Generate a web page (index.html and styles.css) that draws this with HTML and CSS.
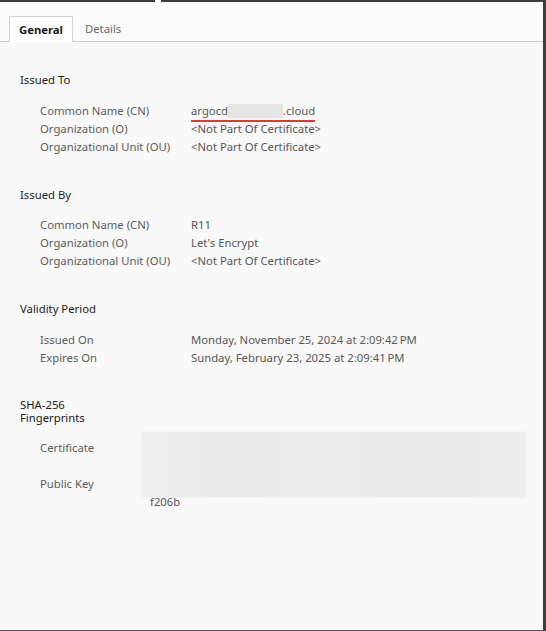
FILE: index.html
```html
<!DOCTYPE html>
<html>
<head>
<meta charset="utf-8">
<link rel="stylesheet" href="styles.css">
</head>
<body>
<div class="window">
  <div class="topbar"><div class="seg seg-left"></div><div class="seg seg-right"></div></div>
  <div class="tabs">
    <div class="tab tab-active">General</div>
    <div class="tab">Details</div>
  </div>
  <div class="content">
    <section class="section">
      <h2 class="heading">Issued To</h2>
      <div class="rows">
        <div class="label">Common Name (CN)</div>
        <div class="value"><span class="cn">argocd<span class="redact"></span>.cloud</span></div>
        <div class="label">Organization (O)</div>
        <div class="value">&lt;Not Part Of Certificate&gt;</div>
        <div class="label">Organizational Unit (OU)</div>
        <div class="value">&lt;Not Part Of Certificate&gt;</div>
      </div>
    </section>
    <section class="section">
      <h2 class="heading">Issued By</h2>
      <div class="rows">
        <div class="label">Common Name (CN)</div>
        <div class="value">R11</div>
        <div class="label">Organization (O)</div>
        <div class="value">Let's Encrypt</div>
        <div class="label">Organizational Unit (OU)</div>
        <div class="value">&lt;Not Part Of Certificate&gt;</div>
      </div>
    </section>
    <section class="section">
      <h2 class="heading">Validity Period</h2>
      <div class="rows">
        <div class="label">Issued On</div>
        <div class="value">Monday, November 25, 2024 at 2:09:42&#8201;PM</div>
        <div class="label">Expires On</div>
        <div class="value">Sunday, February 23, 2025 at 2:09:41&#8201;PM</div>
      </div>
    </section>
    <section class="section section-fp">
      <h2 class="heading heading-tight">SHA-256<br>Fingerprints</h2>
      <div class="fp">
        <div class="fp-labels">
          <div class="label">Certificate</div>
          <div class="label">Public Key</div>
        </div>
        <div class="fp-values">
          <div class="blur"></div>
          <div class="fp-tail">f206b</div>
        </div>
      </div>
    </section>
  </div>
</div>
</body>
</html>
```
FILE: styles.css
```css
html, body {
  margin: 0;
  padding: 0;
}
body {
  background: #fafafa;
  font-family: "Noto Sans", "Open Sans", sans-serif;
  font-size: 11.3px;
  color: #5c5c5c;
}
.window {
  width: 546px;
  height: 631px;
  box-sizing: border-box;
  border-right: 3px solid #3d3d3d;
  border-bottom: 1px solid #555;
  display: flex;
  flex-direction: column;
  background: #fafafa;
}
.topbar {
  display: flex;
  height: 2px;
  gap: 6px;
}
.seg {
  background: #3d3d3d;
}
.seg-left { width: 155px; }
.seg-right { flex: 1; }
.tabs {
  display: flex;
  align-items: flex-end;
  height: 40px;
  padding-left: 9px;
  border-bottom: 1px solid #c9c9c9;
  background: #fbfbfb;
  box-sizing: border-box;
}
.tab {
  height: 25px;
  line-height: 25px;
  padding: 0 12px;
  color: #6a6a6a;
  box-sizing: border-box;
}
.tab-active {
  width: 64px;
  padding: 0;
  text-align: center;
  font-weight: 700;
  color: #1a1a1a;
  background: #ffffff;
  border: 1px solid #d4d4d4;
  border-bottom: none;
  height: 26px;
  margin-bottom: -1px;
}
.content {
  padding: 29px 0 0 20px;
  flex: 1;
  background: #f9f9f9;
}
.section {
  margin-bottom: 30px;
}
.heading {
  margin: 0 0 12.5px 0;
  font-size: 11.3px;
  font-weight: 400;
  line-height: 18px;
  color: #1b1b1b;
}
.heading-tight {
  line-height: 13px;
  margin-bottom: 8px;
}
.section-fp {
  margin-top: 31px;
}
.rows {
  display: grid;
  grid-template-columns: 151px 1fr;
  padding-left: 20px;
  line-height: 18px;
}
.value {
  color: #575757;
  white-space: nowrap;
}
.cn {
  display: inline-block;
  position: relative;
  height: 18px;
}
.cn::after {
  content: "";
  position: absolute;
  left: 0;
  right: 0;
  bottom: -2px;
  height: 2px;
  background: #d83b3f;
}
.redact {
  display: inline-block;
  width: 55px;
  height: 14px;
  vertical-align: -3px;
  background: #e4e4e4;
}
.fp {
  display: flex;
  padding-left: 20px;
  line-height: 18px;
}
.fp-labels {
  width: 102px;
  padding-top: 7px;
  display: flex;
  flex-direction: column;
  gap: 18px;
}
.fp-values {
  width: 383px;
}
.blur {
  height: 65px;
  background: linear-gradient(90deg, #efefef 0%, #ebebeb 20%, #ededed 50%, #eaeaea 75%, #eeeeee 100%);
  box-shadow: 0 0 2px 1px #f2f2f2;
}
.fp-tail {
  margin-top: -4px;
  padding-left: 8px;
  color: #575757;
}
```
